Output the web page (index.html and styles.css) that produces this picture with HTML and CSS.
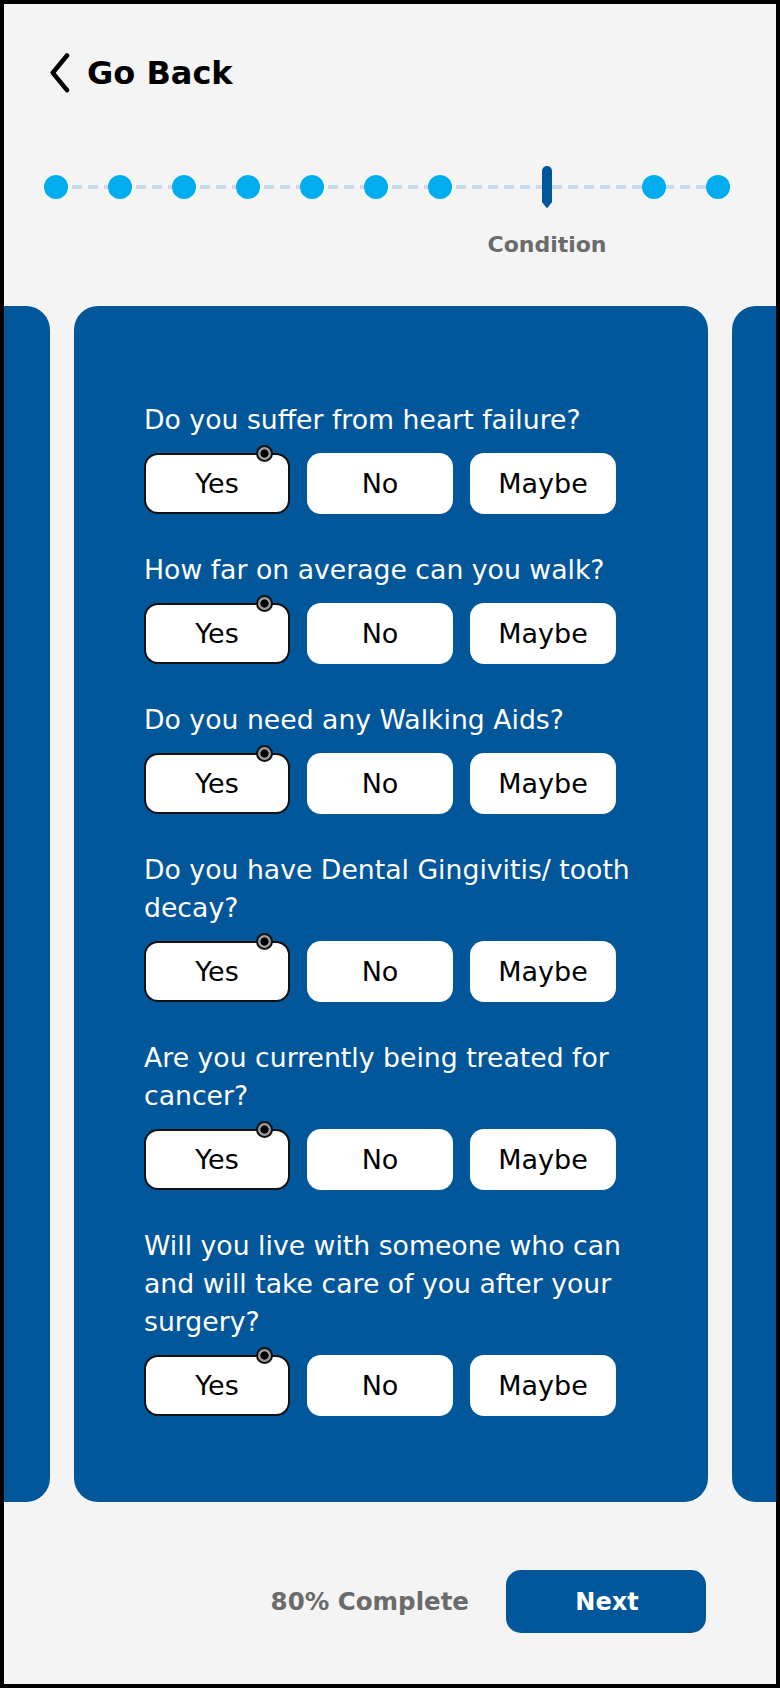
FILE: index.html
```html
<!DOCTYPE html>
<html lang="en">
<head>
<meta charset="utf-8">
<title>Condition</title>
<link rel="stylesheet" href="styles.css">
</head>
<body>
<div class="screen">
  <header class="topbar">
    <a class="back" href="#">
      <svg class="back-icon" width="20" height="40" viewBox="0 0 20 40" aria-hidden="true"><polyline points="17,2.5 2.8,19.8 17,37.2" fill="none" stroke="#000" stroke-width="4.5" stroke-linecap="round" stroke-linejoin="round"/></svg>
      <span>Go Back</span>
    </a>
  </header>

  <nav class="steps">
    <span class="dot"></span>
    <span class="dot"></span>
    <span class="dot"></span>
    <span class="dot"></span>
    <span class="dot"></span>
    <span class="dot"></span>
    <span class="dot"></span>
    <span class="current">
      <svg class="marker" width="10" height="42" viewBox="0 0 10 42" aria-hidden="true"><path d="M0 5 A5 5 0 0 1 10 5 V36 L5.8 41.4 Q5 42.2 4.2 41.4 L0 36 Z" fill="#03559a"/></svg>
      <span class="step-label">Condition</span>
    </span>
    <span class="dot"></span>
    <span class="dot"></span>
  </nav>

  <section class="carousel">
    <div class="card card-side"></div>
    <div class="card">
      <div class="q">
        <p class="q-text">Do you suffer from heart failure?</p>
        <div class="opts">
          <button class="opt selected">Yes<span class="radio"></span></button>
          <button class="opt">No</button>
          <button class="opt">Maybe</button>
        </div>
      </div>
      <div class="q">
        <p class="q-text">How far on average can you walk?</p>
        <div class="opts">
          <button class="opt selected">Yes<span class="radio"></span></button>
          <button class="opt">No</button>
          <button class="opt">Maybe</button>
        </div>
      </div>
      <div class="q">
        <p class="q-text">Do you need any Walking Aids?</p>
        <div class="opts">
          <button class="opt selected">Yes<span class="radio"></span></button>
          <button class="opt">No</button>
          <button class="opt">Maybe</button>
        </div>
      </div>
      <div class="q">
        <p class="q-text">Do you have Dental Gingivitis/ tooth decay?</p>
        <div class="opts">
          <button class="opt selected">Yes<span class="radio"></span></button>
          <button class="opt">No</button>
          <button class="opt">Maybe</button>
        </div>
      </div>
      <div class="q">
        <p class="q-text">Are you currently being treated for cancer?</p>
        <div class="opts">
          <button class="opt selected">Yes<span class="radio"></span></button>
          <button class="opt">No</button>
          <button class="opt">Maybe</button>
        </div>
      </div>
      <div class="q">
        <p class="q-text">Will you live with someone who can and will take care of you after your surgery?</p>
        <div class="opts">
          <button class="opt selected">Yes<span class="radio"></span></button>
          <button class="opt">No</button>
          <button class="opt">Maybe</button>
        </div>
      </div>
    </div>
    <div class="card card-side"></div>
  </section>

  <footer class="footer">
    <span class="progress-text">80% Complete</span>
    <button class="next">Next</button>
  </footer>
</div>
</body>
</html>
```

FILE: styles.css
```css
* { box-sizing: border-box; }

html, body {
  margin: 0;
  padding: 0;
}

body {
  background: #000;
}

.screen {
  width: 780px;
  height: 1688px;
  border: 4px solid #000;
  background: #f4f4f4;
  overflow: hidden;
  font-family: "DejaVu Sans", "Liberation Sans", sans-serif;
  color: #000;
}

/* header */
.topbar {
  display: flex;
  padding: 49px 0 0 46px;
}

.back {
  display: flex;
  align-items: center;
  gap: 17px;
  color: #000;
  text-decoration: none;
  font-weight: 700;
  font-size: 32px;
  line-height: 40px;
}

.back-icon { display: block; }

/* steps */
.steps {
  display: flex;
  align-items: flex-start;
  gap: 40px;
  margin: 73px 0 0 40px;
  width: 686px;
  background-image: repeating-linear-gradient(to right, #c9dbea 0 10px, transparent 10px 16px);
  background-size: 662px 4px;
  background-position: 12px 19px;
  background-repeat: no-repeat;
}

.dot {
  flex: none;
  width: 24px;
  height: 24px;
  margin-top: 9px;
  border-radius: 50%;
  background: #00aeef;
}

.current {
  flex: none;
  width: 110px;
  display: flex;
  flex-direction: column;
  align-items: center;
}

.marker { display: block; }

.step-label {
  margin-top: 23px;
  font-size: 22px;
  line-height: 27px;
  font-weight: 700;
  color: #6b6b6b;
  white-space: nowrap;
}

/* carousel */
.carousel {
  display: flex;
  justify-content: center;
  gap: 24px;
  margin-top: 48px;
  overflow: hidden;
  padding-left: 2px;
}

.card {
  flex: none;
  width: 634px;
  height: 1196px;
  border-radius: 24px;
  background: #02569a;
  padding: 95px 70px 0 70px;
}

.q + .q { margin-top: 37px; }

.q-text {
  margin: 0 0 14px 0;
  color: #fff;
  font-size: 26.7px;
  line-height: 38px;
  font-weight: 400;
}

.opts {
  display: flex;
  gap: 17px;
}

.opt {
  position: relative;
  width: 146px;
  height: 61px;
  border: none;
  border-radius: 14px;
  background: #fff;
  color: #000;
  font-family: "DejaVu Sans", "Liberation Sans", sans-serif;
  font-size: 27px;
  padding: 0;
  display: flex;
  align-items: center;
  justify-content: center;
}

.opt.selected {
  border: 2px solid #111;
}

.radio {
  position: absolute;
  top: -10.5px;
  right: 15px;
  width: 17px;
  height: 17px;
  border-radius: 50%;
  border: 2px solid #111;
  background: radial-gradient(circle, #000 0 3.8px, #9d9d9d 4.4px);
}

/* footer */
.footer {
  display: flex;
  justify-content: flex-end;
  align-items: center;
  gap: 37px;
  margin-top: 68px;
  padding-right: 70px;
}

.progress-text {
  font-size: 24.5px;
  font-weight: 700;
  color: #6b6b6b;
}

.next {
  width: 200px;
  height: 63px;
  border: none;
  border-radius: 15px;
  background: #02569a;
  color: #fff;
  font-family: "DejaVu Sans", "Liberation Sans", sans-serif;
  font-weight: 700;
  font-size: 24px;
  padding: 0 0 0 2px;
}
```
